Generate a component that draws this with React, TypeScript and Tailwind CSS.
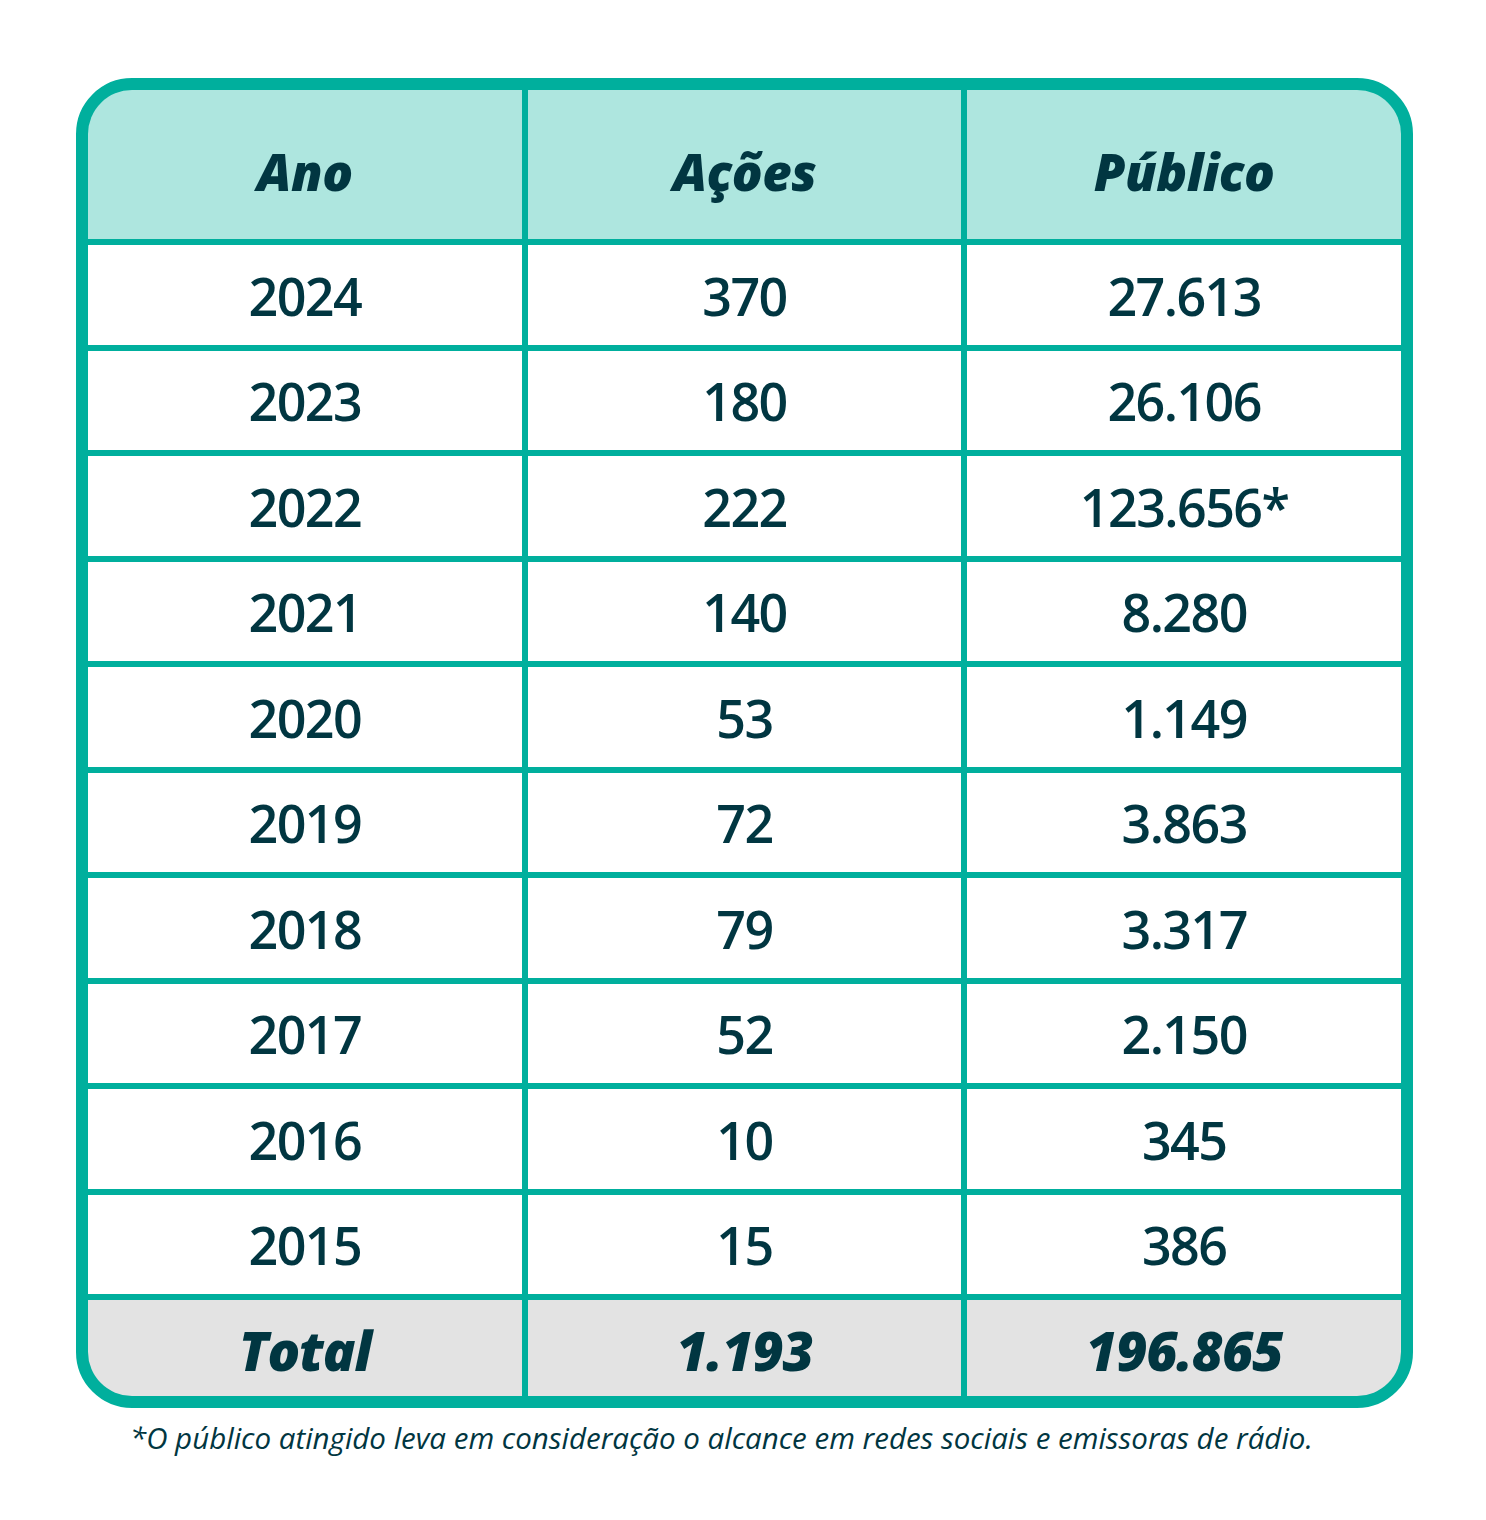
const rows: [string, string, string][] = [
  ["2024", "370", "27.613"],
  ["2023", "180", "26.106"],
  ["2022", "222", "123.656*"],
  ["2021", "140", "8.280"],
  ["2020", "53", "1.149"],
  ["2019", "72", "3.863"],
  ["2018", "79", "3.317"],
  ["2017", "52", "2.150"],
  ["2016", "10", "345"],
  ["2015", "15", "386"],
];

const font = { fontFamily: '"Open Sans", "Noto Sans", sans-serif' };

function HeadCell({ children }: { children: string }) {
  return (
    <div className="flex h-[149px] items-center justify-center bg-[#aee6df] pt-[14px] text-[51px] font-extrabold italic tracking-[-0.01em] text-[#013641]">
      {children}
    </div>
  );
}

function Cell({ children }: { children: string }) {
  return (
    <div className="flex h-[99.5px] items-center justify-center bg-white pt-[2px] text-[52px] font-semibold tracking-[-0.03em] text-[#013641]">
      {children}
    </div>
  );
}

function TotalCell({ children }: { children: string }) {
  return (
    <div className="flex flex-1 items-center justify-center bg-[#e3e3e3] pt-[4px] text-[54px] font-extrabold italic tracking-[-0.02em] text-[#013641]">
      {children}
    </div>
  );
}

export default function App() {
  return (
    <div className="min-h-[1520px] bg-white pt-[78px]" style={font}>
      <div className="ml-[76px] w-[1337px]">
        <div className="flex h-[1330px] flex-col gap-[6px] overflow-hidden rounded-[56px] border-[12px] border-[#00af9d] bg-[#00af9d]">
          <div className="grid grid-cols-3 gap-[6px]">
            <HeadCell>Ano</HeadCell>
            <HeadCell>Ações</HeadCell>
            <HeadCell>Público</HeadCell>
          </div>
          {rows.map((r) => (
            <div key={r[0]} className="grid grid-cols-3 gap-[6px]">
              <Cell>{r[0]}</Cell>
              <Cell>{r[1]}</Cell>
              <Cell>{r[2]}</Cell>
            </div>
          ))}
          <div className="grid flex-1 grid-cols-3 gap-[6px]">
            <TotalCell>Total</TotalCell>
            <TotalCell>1.193</TotalCell>
            <TotalCell>196.865</TotalCell>
          </div>
        </div>
        <p className="mt-[10px] pl-[54px] text-[29.5px] italic leading-[40px] text-[#013641]">
          *O público atingido leva em consideração o alcance em redes sociais e emissoras de rádio.
        </p>
      </div>
    </div>
  );
}
